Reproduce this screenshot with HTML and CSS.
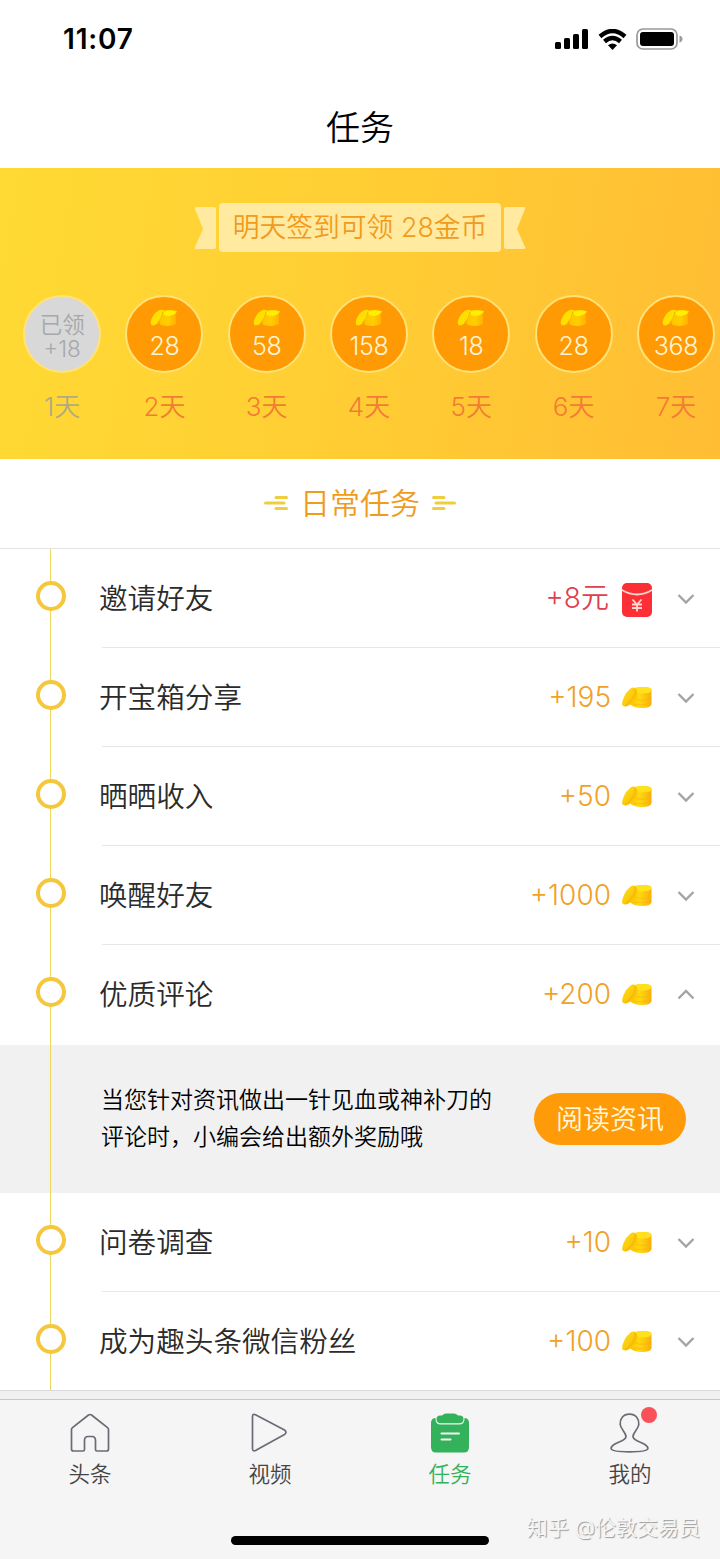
FILE: index.html
```html
<!DOCTYPE html>
<html lang="zh-CN">
<head>
<meta charset="utf-8">
<title>任务</title>
<link rel="stylesheet" href="styles.css">
</head>
<body>
<svg class="defs" width="0" height="0" aria-hidden="true">
  <defs>
    <linearGradient id="gold" x1="0" y1="0" x2="1" y2="0"><stop offset="0" stop-color="#ffc400"/><stop offset=".45" stop-color="#ffd810"/><stop offset="1" stop-color="#f9ae0a"/></linearGradient>
    <linearGradient id="gold2" x1="0" y1="0" x2="1" y2="1"><stop offset="0" stop-color="#ffe21c"/><stop offset="1" stop-color="#f8b500"/></linearGradient>
    <linearGradient id="badge" x1="0" y1="0" x2="1" y2="0"><stop offset="0" stop-color="#ffc400"/><stop offset=".5" stop-color="#ffce00"/><stop offset="1" stop-color="#ffae00"/></linearGradient>
    <symbol id="coin" viewBox="0 0 32 24">
      <path d="M12 4 Q13 1 21 1 Q30.500 1 30.500 4 V18 Q30 22 21 22 Q12 22 9 18Z" fill="url(#gold)"/>
      <path d="M13 4 Q14 1 21.500 1 Q30.500 1 30.500 4 Q30 7.500 21.500 7.500 Q14 7.500 13 4Z" fill="#ffe11c"/>
      <path d="M14 13 Q21 16 30.500 12.500 M12 18 Q20 20 30.500 17" stroke="#f6b010" stroke-width=".6" fill="none"/>
      <path d="M9 3 Q12 .500 15 2.500 Q18 6 15 12 Q11 19 5 20.500 Q2 21 1 18.500 Q1 15 3 11 Q5 6 9 3Z" fill="url(#gold2)"/>
      <path d="M13.500 3 Q15.500 5 12.500 11 Q9 17 4 20" stroke="#f3ae00" stroke-width=".9" fill="none"/>
    </symbol>
    <symbol id="coin-small" viewBox="0 0 28 18">
      <path d="M12 2 Q19 0 27 2 L25.500 6 L26 9 L26 15 Q19 18.500 11 16 Q8 15 11 10Z" fill="url(#badge)"/>
      <path d="M12.500 3 Q19 0 27 2.500 Q25 6 19 7 Q13 7 12.500 3Z" fill="#ffee00"/>
      <path d="M8 2 Q11 0 14 1.500 Q14 8 8 14 Q4 17.500 1.500 16 Q0 14 1.500 10 Q4 4 8 2Z" fill="#ffdf00"/>
      <path d="M13 3 Q12.500 9 7.500 14" fill="none" stroke="#f3b400" stroke-width="1"/>
    </symbol>
    <symbol id="down" viewBox="0 0 18 12"><path d="M1.500 2 L9 9.500 L16.500 2" fill="none" stroke="#a4a4a4" stroke-width="2.400"/></symbol>
    <symbol id="up" viewBox="0 0 18 12"><path d="M1.500 9.500 L9 2 L16.500 9.500" fill="none" stroke="#a4a4a4" stroke-width="2.400"/></symbol>
    <symbol id="rays" viewBox="0 0 24 16"><path d="M12 2.500H22.500M1.500 8H20M12 13.500H22.500" stroke="#f0cd3c" stroke-width="3" stroke-linecap="round"/></symbol>
  </defs>
</svg>
<div class="app">
  <header class="status">
    <span class="time">11:07</span>
    <div class="status-icons">
      <svg width="34" height="20" viewBox="0 0 34 20"><rect x="0" y="13" width="6" height="7" rx="1.500"/><rect x="9" y="9" width="6" height="11" rx="1.500"/><rect x="18" y="5" width="6" height="15" rx="1.500"/><rect x="27" y="0" width="6" height="20" rx="1.500"/></svg>
      <svg width="29" height="21" viewBox="0 0 29 21"><path d="M2 7.500 Q14.500 -3.500 27 7.500M6.500 12.500 Q14.500 5.500 22.500 12.500" fill="none" stroke="#000" stroke-width="4.400"/><path d="M10 16.300 Q14.500 12.500 19 16.300 L14.500 21Z"/></svg>
      <svg width="47" height="22" viewBox="0 0 47 22"><rect x="1" y="1" width="40" height="20" rx="6" fill="none" stroke="#999" stroke-width="1.700"/><rect x="4" y="4" width="34" height="14" rx="3"/><path d="M43.500 7.500 Q46.500 8.500 46.500 11 Q46.500 13.500 43.500 14.500Z" fill="#999"/></svg>
    </div>
  </header>
  <h1 class="title">任务</h1>

  <section class="signin">
    <div class="ribbon">
      <svg width="23" height="44" viewBox="0 0 23 44"><path d="M2 1H20Q22 1 22 3V41Q22 43 20 43H2Q0 43 1 41L9 23L1 3Q0 1 2 1Z" fill="#ffeaa0"/></svg>
      <span class="ribbon-text">明天签到可领 28金币</span>
      <svg class="flip" width="23" height="44" viewBox="0 0 23 44"><path d="M2 1H20Q22 1 22 3V41Q22 43 20 43H2Q0 43 1 41L9 23L1 3Q0 1 2 1Z" fill="#ffeaa0"/></svg>
    </div>
    <div class="days">
      <div class="day got"><div class="disc"><span>已领</span><span>+18</span></div><p>1天</p></div>
      <div class="day"><div class="disc"><svg class="coin-small"><use href="#coin-small"/></svg><b>28</b></div><p>2天</p></div>
      <div class="day"><div class="disc"><svg class="coin-small"><use href="#coin-small"/></svg><b>58</b></div><p>3天</p></div>
      <div class="day"><div class="disc"><svg class="coin-small"><use href="#coin-small"/></svg><b>158</b></div><p>4天</p></div>
      <div class="day"><div class="disc"><svg class="coin-small"><use href="#coin-small"/></svg><b>18</b></div><p>5天</p></div>
      <div class="day"><div class="disc"><svg class="coin-small"><use href="#coin-small"/></svg><b>28</b></div><p>6天</p></div>
      <div class="day"><div class="disc"><svg class="coin-small"><use href="#coin-small"/></svg><b>368</b></div><p>7天</p></div>
    </div>
  </section>

  <h2 class="section-title"><svg class="rays"><use href="#rays"/></svg><span>日常任务</span><svg class="rays flip"><use href="#rays"/></svg></h2>

  <main class="tasks">
    <div class="task"><i class="dot"></i><div class="task-body"><span class="name">邀请好友</span><span class="reward cash">+8元</span>
      <svg class="packet" viewBox="0 0 32 36"><rect x="1" y="1" width="30" height="34" rx="5" fill="#fb2f35"/><path d="M1 8 Q16 17 31 8" fill="none" stroke="#ffd5cc" stroke-width="1.800"/><path d="M11.500 17.500L16 22.500L20.500 17.500M16 22.500V29.500M11 22.500H21M11 26H21" fill="none" stroke="#ffd9d2" stroke-width="1.800"/></svg>
      <svg class="chev"><use href="#down"/></svg></div></div>
    <div class="task"><i class="dot"></i><div class="task-body"><span class="name">开宝箱分享</span><span class="reward">+195</span><svg class="coin"><use href="#coin"/></svg><svg class="chev"><use href="#down"/></svg></div></div>
    <div class="task"><i class="dot"></i><div class="task-body"><span class="name">晒晒收入</span><span class="reward">+50</span><svg class="coin"><use href="#coin"/></svg><svg class="chev"><use href="#down"/></svg></div></div>
    <div class="task"><i class="dot"></i><div class="task-body"><span class="name">唤醒好友</span><span class="reward">+1000</span><svg class="coin"><use href="#coin"/></svg><svg class="chev"><use href="#down"/></svg></div></div>
    <div class="task open"><i class="dot"></i><div class="task-body"><span class="name">优质评论</span><span class="reward">+200</span><svg class="coin"><use href="#coin"/></svg><svg class="chev"><use href="#up"/></svg></div></div>
    <div class="detail"><p>当您针对资讯做出一针见血或神补刀的<br>评论时，小编会给出额外奖励哦</p><button class="go">阅读资讯</button></div>
    <div class="task"><i class="dot"></i><div class="task-body"><span class="name">问卷调查</span><span class="reward">+10</span><svg class="coin"><use href="#coin"/></svg><svg class="chev"><use href="#down"/></svg></div></div>
    <div class="task last"><i class="dot"></i><div class="task-body"><span class="name">成为趣头条微信粉丝</span><span class="reward">+100</span><svg class="coin"><use href="#coin"/></svg><svg class="chev"><use href="#down"/></svg></div></div>
  </main>
  <div class="gap"></div>

  <nav class="tabs">
    <div class="tab"><svg width="40" height="40" viewBox="0 0 40 40"><path d="M1.500 16.500 Q1.500 15.500 2.500 14.700 L18.500 2 Q20 1 21.500 2 L37.500 14.700 Q38.500 15.500 38.500 16.500 V36 Q38.500 38 36.500 38 H27 Q25.500 38 25.500 36.500 V27.500 Q25.500 23.500 22 23.500 H18 Q14.500 23.500 14.500 27.500 V36.500 Q14.500 38 13 38 H3.500 Q1.500 38 1.500 36Z" class="line"/></svg><span>头条</span></div>
    <div class="tab"><svg width="40" height="40" viewBox="0 0 40 40"><path d="M2.500 3.500 Q2.500 .500 5.500 1.700 L34.500 17 Q37.500 19.300 34.500 21.500 L5.500 37.500 Q2.500 38.800 2.500 35.500Z" class="line"/></svg><span>视频</span></div>
    <div class="tab active"><svg width="40" height="40" viewBox="0 0 40 40"><path d="M6 5H34Q39 5 39 10V34Q39 39.500 34 39.500H6Q1 39.500 1 34V10Q1 5 6 5Z" fill="#34b15b"/><path d="M5.500 3 V6 Q5.500 11.500 11 11.500 H29 Q34.500 11.500 34.500 6 V3Z" fill="#f5f5f5"/><path d="M10 2.500 H12 Q14 .500 16 .500 H24 Q26 .500 28 2.500 H30 Q33.500 2.500 33.500 6 Q33.500 10.200 29 10.200 H11 Q6.500 10.200 6.500 6 Q6.500 2.500 10 2.500Z" fill="#34b15b"/><path d="M11.500 20.500H29M11.500 26.500H20.500" stroke="#f5f5f5" stroke-width="2" stroke-linecap="round"/></svg><span>任务</span></div>
    <div class="tab"><svg width="40" height="40" viewBox="0 0 40 40"><path d="M19.500 1.200 C13 1.200 9.800 6 10.200 11.500 C10.600 16 16 19.500 16 23.500 C16 27.500 9 28.500 4.500 31.200 C1.500 33 1 34 1.100 35.500 C1.300 38 7 38.800 19.500 38.800 C32 38.800 37.700 38 37.900 35.500 C38 34 37.500 33 34.500 31.200 C30 28.500 23 27.500 23 23.500 C23 19.500 28.400 16 28.800 11.500 C29.200 6 26 1.200 19.500 1.200Z" class="line"/></svg><span>我的</span><i class="alert"></i></div>
  </nav>
  <div class="home-bar"></div>
  <div class="watermark">知乎 @伦敦交易员</div>
</div>
</body>
</html>
```
FILE: styles.css
```css
* { box-sizing: border-box; }
body, h1, h2, p { margin: 0; }
body {
  width: 720px;
  font-family: Inter, "Noto Sans CJK SC", sans-serif;
  font-weight: 350;
  background: #fff;
}
svg { display: block; flex: none; }
.defs { position: absolute; }
.flip { transform: scaleX(-1); }
.app {
  position: relative;
  display: flex;
  flex-direction: column;
  height: 1559px;
  overflow: hidden;
}
.status {
  display: flex;
  justify-content: space-between;
  align-items: center;
  height: 78px;
  padding: 0 37px 0 63px;
}
.time { font-size: 28px; font-weight: 600; letter-spacing: .8px; }
.status-icons { display: flex; align-items: center; gap: 9px; }
.title {
  height: 90px;
  line-height: 100px;
  text-align: center;
  font-size: 34px;
  font-weight: 350;
}
.signin {
  height: 291px;
  padding-top: 35px;
  background: linear-gradient(100deg, #ffda33 0%, #ffcf33 45%, #ffbd33 100%);
  overflow: hidden;
}
.ribbon { display: flex; justify-content: center; align-items: center; gap: 2px; height: 49px; }
.ribbon-text {
  width: 282px;
  height: 49px;
  line-height: 49px;
  border-radius: 4px;
  background: #ffeaa0;
  color: #f19a1c;
  font-size: 26.8px;
  text-align: center;
  white-space: nowrap;
}
.days { display: flex; width: 720px; padding: 43px 0 0 11px; }
.day { flex: 0 0 102.3px; display: flex; flex-direction: column; align-items: center; }
.disc {
  display: flex;
  flex-direction: column;
  align-items: center;
  width: 78px;
  height: 78px;
  padding-top: 12px;
  border: 2px solid #ffe278;
  border-radius: 50%;
  background: #ff9a05;
  color: #fff4d2;
}
.coin-small { width: 28px; height: 18px; }
.disc b { font-size: 25px; font-weight: 350; line-height: 38px; letter-spacing: -.3px; }
.day p { margin-top: 15px; color: #f47b35; font-size: 26px; line-height: 38px; }
.got .disc { background: #d8d8d8; color: #a6a8ab; font-size: 22.5px; line-height: 24px; padding-top: 16px; }
.got p { color: #b2a986; }
.section-title {
  display: flex;
  justify-content: center;
  align-items: center;
  gap: 12px;
  height: 90px;
  padding-bottom: 2px;
  border-bottom: 1px solid #e4e4e4;
  color: #f09b1c;
  font-size: 30px;
  font-weight: 350;
}
.section-title span { padding-bottom: 3px; }
.rays { width: 24px; height: 16px; }
.tasks { position: relative; height: 841px; }
.tasks::before {
  content: "";
  position: absolute;
  left: 50px;
  top: 0;
  bottom: 0;
  width: 1px;
  background: #efd75c;
}
.task { display: flex; height: 99px; padding-left: 36px; }
.task.open { height: 100px; }
.task.last { height: 98px; }
.dot {
  position: relative;
  flex: none;
  width: 30px;
  height: 30px;
  margin: 32px 36px 0 0;
  border: 4px solid #f4c73d;
  border-radius: 50%;
  background: #fff;
}
.task-body {
  flex: 1;
  display: flex;
  align-items: center;
  height: 99px;
  padding-right: 25px;
  border-bottom: 1px solid #e7e7e7;
}
.open .task-body, .last .task-body { height: 98px; border-bottom: 0; }
.name { flex: 1; margin-left: -3px; padding-bottom: 4px; color: #2b2b2b; font-size: 28.6px; }
.reward { padding-bottom: 1px; color: #f0a126; font-size: 28px; margin-right: 10px; }
.cash { color: #e0404a; margin-right: 12px; padding-bottom: 5px; }
.coin { width: 32px; height: 24px; margin: 2px 24px 0 0; }
.packet { width: 32px; height: 36px; margin: 3px 24px 0 0; }
.chev { width: 18px; height: 12px; margin-top: 2px; }
.detail {
  display: flex;
  align-items: center;
  justify-content: space-between;
  height: 148px;
  padding: 0 34px 0 101px;
  background: #f1f1f1;
}
.detail p { font-size: 23px; line-height: 37px; color: #000; }
.go {
  width: 152px;
  height: 52px;
  padding: 0 0 3px;
  border: 0;
  border-radius: 26px;
  background: #ff9b08;
  color: #fff6dc;
  font: inherit;
  font-size: 27px;
}
.gap { height: 9px; background: #f0f0f0; border-top: 1px solid #d9d9d9; }
.tabs {
  display: flex;
  height: 160px;
  border-top: 1px solid #c9c9c9;
  background: #f5f5f5;
}
.tab {
  position: relative;
  flex: 1;
  display: flex;
  flex-direction: column;
  align-items: center;
  padding-top: 13px;
  color: #444;
  font-size: 21.5px;
}
.tab span { margin-top: 5px; line-height: 32px; }
.tab.active { color: #34b15b; }
.line { fill: none; stroke: #6b6b76; stroke-width: 1.7; stroke-linejoin: round; }
.alert {
  position: absolute;
  left: 101px;
  top: 7px;
  width: 16px;
  height: 16px;
  border-radius: 50%;
  background: #fa5058;
}
.home-bar {
  position: absolute;
  left: 231px;
  top: 1536px;
  width: 258px;
  height: 9px;
  border-radius: 5px;
  background: #000;
}
.watermark {
  position: absolute;
  right: 20px;
  top: 1513px;
  color: #f6f6f6;
  font-size: 21px;
  font-weight: 400;
  line-height: 30px;
  text-shadow: 1px 1px 1px #999;
  white-space: nowrap;
}
```
